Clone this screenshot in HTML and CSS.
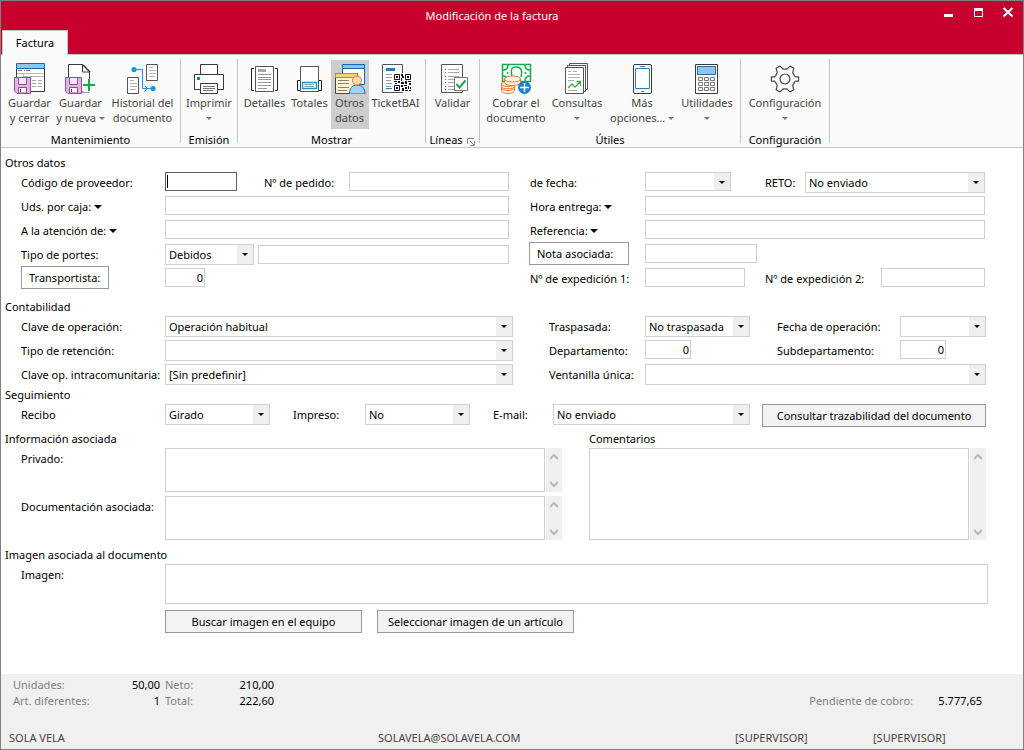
FILE: index.html
```html
<!DOCTYPE html>
<html lang="es">
<head>
<meta charset="utf-8">
<meta name="viewport" content="width=device-width, initial-scale=1">
<title>Modificación de la factura</title>
<link rel="stylesheet" href="styles.css">
</head>
<body>
<div class="window">
  <header class="titlebar">
    <div class="caption">
      <h1 class="caption-text">Modificación de la factura</h1>
      <div class="caption-buttons">
        <button class="caption-btn" aria-label="Minimizar"><svg width="12" height="12" viewBox="0 0 12 12"><rect x="2" y="8" width="9" height="3" fill="#fff"/></svg></button>
        <button class="caption-btn" aria-label="Maximizar"><svg width="12" height="12" viewBox="0 0 12 12"><path d="M2 2h9v9H2zM3 5v5h7V5z" fill="#fff" fill-rule="evenodd"/></svg></button>
        <button class="caption-btn" aria-label="Cerrar"><svg width="12" height="12" viewBox="0 0 12 12"><path d="M1.500 2l9 8.500M10.500 2l-9 8.500" stroke="#fff" stroke-width="2.200"/></svg></button>
      </div>
    </div>
    <nav class="tabs"><button class="tab">Factura</button></nav>
  </header>

  <div class="ribbon">
    <section class="group g-mant">
      <div class="tools">
        <button class="tool">
          <svg class="icon" viewBox="0 0 32 32"><path d="M2.500 6.500h28v23h-28z" fill="#fff" stroke="#3a3a3a"/><path d="M2.500 1.500h28v5h-28z" fill="#8cc6ee" stroke="#1468ad"/><path d="M4 8.500h4m2 0h1m1 0h4" stroke="#777"/><path d="M3 11.500h27M9.500 11v4M9 14.500h21" stroke="#b9b9b9"/><path d="M18 18.500h4m2 0h4M18 21.500h4m2 0h4M18 24.500h4m2 0h4" stroke="#a8a8a8"/><path d="M.5 15.500h16v16H3l-2.500-2.500z" fill="#deb8dd" stroke="#974a9b"/><path d="M4.500 16v6.500h8V16" fill="#f6e8f5" stroke="#974a9b"/><path d="M4.500 31v-5.500h8V31z" fill="#fff" stroke="#974a9b"/><path d="M6.500 27v3" stroke="#444"/></svg>
          <span>Guardar<br>y cerrar</span>
        </button>
        <button class="tool">
          <svg class="icon" viewBox="0 0 32 32"><path d="M3.500 2.500h14l7 7.500v20h-21z" fill="#fff" stroke="#3a3a3a"/><path d="M17.500 2.500v7.500h7.500" fill="#fff" stroke="#3a3a3a"/><path d="M18 3l7 7" stroke="#3a3a3a" stroke-width="1.500"/><path d="M22 17h10v13H18z" fill="#fafafa"/><path d="M.5 15.500h16v16H3l-2.500-2.500z" fill="#deb8dd" stroke="#974a9b"/><path d="M4.500 16v6.500h8V16" fill="#f6e8f5" stroke="#974a9b"/><path d="M4.500 31v-5.500h8V31z" fill="#fff" stroke="#974a9b"/><path d="M6.500 27v3" stroke="#444"/><path d="M24 17v12M18 23h12" stroke="#17a94f" stroke-width="2"/></svg>
          <span>Guardar<br>y nueva <i class="caret grey"></i></span>
        </button>
        <button class="tool">
          <svg class="icon" viewBox="0 0 32 32"><path d="M19.500 2.500h11v16h-11zM.5 15.500h11v16H.5z" fill="#fff" stroke="#555"/><path d="M22 5.500h4M22 8.500h7M22 11.500h7M22 14.500h6M3 18.500h4M3 21.500h7M3 24.500h7M3 27.500h6" stroke="#b0b0b0"/><path d="M7 7.500h8.500v19H25M17.500 23.500l3 3-3 3" fill="none" stroke="#0a9be3"/><circle cx="7" cy="7.500" r="2.600" fill="#0a9be3"/><circle cx="26" cy="26.500" r="2.600" fill="#0a9be3"/></svg>
          <span>Historial del<br>documento</span>
        </button>
      </div>
      <h2 class="group-name">Mantenimiento</h2>
    </section>
    <section class="group g-emis">
      <div class="tools">
        <button class="tool">
          <svg class="icon" viewBox="0 0 32 32"><path d="M7.500 12.500v-10h17v10" fill="#fff" stroke="#3a3a3a"/><path d="M1.500 12.500h29v15h-29z" fill="#fff" stroke="#3a3a3a"/><path d="M7.500 21.500h17v10h-17z" fill="#fff" stroke="#3a3a3a"/><path d="M10 24.500h12M10 26.500h12M10 28.500h10" stroke="#777"/><path d="M4 15h3v3H4z" fill="#1b7fc6"/></svg>
          <span>Imprimir<br><i class="caret grey"></i></span>
        </button>
      </div>
      <h2 class="group-name">Emisión</h2>
    </section>
    <section class="group g-most">
      <div class="tools">
        <button class="tool">
          <svg class="icon" viewBox="0 0 32 32"><path d="M6.500 4.500h18v25h-18z" fill="#fff" stroke="#555"/><path d="M9 7h8v3H9z" fill="#a8a8a8"/><path d="M9 12.500h13M9 15.500h13M9 17.500h13M9 20.500h13M9 23.500h13M9 26.500h9" stroke="#999"/><path d="M5 6.500H2.500v22H5M26 6.500h2.500v22H26" fill="none" stroke="#222"/></svg>
          <span>Detalles</span>
        </button>
        <button class="tool">
          <svg class="icon" viewBox="0 0 32 32"><path d="M6.500 4.500h18v25h-18z" fill="#fff" stroke="#555"/><path d="M8.500 20.500h14v6h-14z" fill="#fff" stroke="#0a9be3" stroke-width="1.400"/><path d="M11 22.500h9M11 24.500h9" stroke="#999"/><path d="M6 18.500H3.500v10H6M25 18.500h2.500v10H25" fill="none" stroke="#222"/></svg>
          <span>Totales</span>
        </button>
        <button class="tool pressed" aria-pressed="true">
          <svg class="icon" viewBox="0 0 32 32"><path d="M8.500 2.500h22v20h-22z" fill="#fff" stroke="#1c6aab"/><path d="M8.500 2.500h22v4h-22z" fill="#8cc6ee" stroke="#1468ad"/><path d="M1.500 11.500h22v20h-22z" fill="#fdf1d2" stroke="#444"/><path d="M1.500 11.500h22v4h-22z" fill="#fbd07c" stroke="#e07b1d"/><path d="M4 18.500h11M4 21.500h11M4 25.500h11M4 28.500h9" stroke="#8a8170"/><path d="M15.500 32c0-6 3-9 7.500-9s8 3 8 9z" fill="#a9d2ef" stroke="#1468ad"/><circle cx="23" cy="18.500" r="4.500" fill="#f9dcb6" stroke="#c77d3a"/></svg>
          <span>Otros<br>datos</span>
        </button>
        <button class="tool">
          <svg class="icon" viewBox="0 0 32 32"><path d="M2.500 2.500h20v28h-20z" fill="#fff" stroke="#555"/><path d="M6 6h9v3H6z" fill="#1b7fc6"/><path d="M6 12.500h6M6 15.500h6M6 18.500h5M6 21.500h6M6 24.500h5" stroke="#999"/><path d="M6 26.500h6" stroke="#1b7fc6"/><path d="M13 11h19v19H13z" fill="#fff"/><path d="M14.500 12.500h5v5h-5zM25.500 12.500h5v5h-5zM14.500 23.500h5v5h-5z" fill="none" stroke="#111"/><path d="M16 14h2v2h-2zM27 14h2v2h-2zM16 25h2v2h-2zM21 12h2v2h-2zM22 14h2v2h-2zM21 16h1v3h-1zM14 19h3v1h-3zM18 19h2v2h-2zM15 21h2v1h-2zM21 20h3v2h-3zM25 19h2v3h-2zM28 19h3v1h-3zM29 21h2v2h-2zM21 23h2v2h-2zM24 23h3v1h-3zM22 26h2v3h-2zM25 25h2v2h-2zM28 24h1v3h-1zM30 25h1v2h-1zM25 28h3v1h-3zM29 28h2v1h-2z" fill="#111"/></svg>
          <span>TicketBAI</span>
        </button>
      </div>
      <h2 class="group-name">Mostrar</h2>
    </section>
    <section class="group g-line">
      <div class="tools">
        <button class="tool">
          <svg class="icon" viewBox="0 0 32 32"><path d="M4.500 2.500h21v28h-21z" fill="#fff" stroke="#555"/><path d="M11 7.500h11M11 10.500h11M11 14.500h11M11 17.500h8M11 20.500h7M11 24.500h7M11 27.500h7" stroke="#a8a8a8"/><path d="M8 7.500h1M8 10.500h1M8 20.500h1M8 24.500h1" stroke="#17a94f"/><path d="M8 14.500h1M8 17.500h1M8 27.500h1" stroke="#d7263d"/><path d="M17.500 15.500h13v13h-13z" fill="#fff" stroke="#777"/><path d="M19.500 22l3 3.500 6-7" fill="none" stroke="#17a94f" stroke-width="2"/></svg>
          <span>Validar</span>
        </button>
      </div>
      <h2 class="group-name">Líneas <svg class="launcher" width="8" height="8" viewBox="0 0 8 8"><path d="M.5 6V.5H7M3 3l4 4M7.500 3v4.500H3" fill="none" stroke="#888"/></svg></h2>
    </section>
    <section class="group g-util">
      <div class="tools">
        <button class="tool">
          <svg class="icon" viewBox="0 0 32 32"><path d="M2.500 2.500h28v17h-28z" fill="#fff" stroke="#17a94f" stroke-width="1.500"/><path d="M3 8q5 0 5-5M25 3q0 5 5 5M25 19q0-5 5-5M3 14q4 0 5 3M12 15c-2-10 1-10 4.500-10s6.500 2 4.500 10" fill="none" stroke="#17a94f" stroke-width="1.500"/><circle cx="7.500" cy="11" r="1" fill="#17a94f"/><circle cx="25.500" cy="11" r="1" fill="#17a94f"/><g fill="#fff4e8" stroke="#e8762c"><path d="M1.500 26v2.500c0 4 13 4 13 0V26z"/><ellipse cx="8" cy="26" rx="6.500" ry="2.500"/><path d="M1.500 22v2.500c0 3 13 3 13 0V22z"/><ellipse cx="8" cy="22" rx="6.500" ry="2.500"/><path d="M4.500 17v3.500c0 4 16 4 16 0V17z"/><ellipse cx="12.500" cy="17" rx="8" ry="3"/></g><circle cx="24.500" cy="25.500" r="6.500" fill="#1b83cc"/><path d="M24.500 21v9M20 25.500h9" stroke="#fff" stroke-width="1.500"/></svg>
          <span>Cobrar el<br>documento</span>
        </button>
        <button class="tool">
          <svg class="icon" viewBox="0 0 32 32"><path d="M8.500 1.500h18v26h-18z" fill="#fff" stroke="#555"/><path d="M6.500 3.500h18v26h-18z" fill="#fff" stroke="#555"/><path d="M4.500 5.500h18v26h-18z" fill="#fff" stroke="#555"/><path d="M7 9.500h3m2 0h4M7 12.500h12M7 15.500h12M7 18.500h6M7 28.500h9" stroke="#b0b0b0"/><path d="M7 26l4-4 3 3 5-5M15.500 19.500h4v4" fill="none" stroke="#3dab35" stroke-width="1.300"/></svg>
          <span>Consultas<br><i class="caret grey"></i></span>
        </button>
        <button class="tool">
          <svg class="icon" viewBox="0 0 32 32"><rect x="7.500" y="2.500" width="18" height="29" rx="1.500" fill="#fff" stroke="#3a3a3a"/><path d="M9.500 6.500h14v20h-14z" fill="#fff" stroke="#1b83cc"/><path d="M14 4.500h5M15 29.500h3" stroke="#777"/></svg>
          <span>Más<br>opciones… <i class="caret grey"></i></span>
        </button>
        <button class="tool">
          <svg class="icon" viewBox="0 0 32 32"><path d="M4.500 2.500h22v29h-22z" fill="#fff" stroke="#3a3a3a"/><path d="M6.500 4.500h18v8h-18z" fill="#8cc6ee" stroke="#1b6fb2"/><path d="M7.500 15.500h4v3h-4zM13.500 15.500h4v3h-4zM19.500 15.500h4v3h-4zM7.500 20.500h4v3h-4zM13.500 20.500h4v3h-4zM19.500 20.500h4v3h-4zM7.500 25.500h4v3h-4zM13.500 25.500h4v3h-4zM19.500 25.500h4v3h-4z" fill="#fff" stroke="#777"/></svg>
          <span>Utilidades<br><i class="caret grey"></i></span>
        </button>
      </div>
      <h2 class="group-name">Útiles</h2>
    </section>
    <section class="group g-conf">
      <div class="tools">
        <button class="tool">
          <svg class="icon" viewBox="-16 -17 32 32"><path d="M9.400-3.400L10.500-2.200H13.600V2.200H10.500L9.400 3.400 7.700 6.400 8.800 10.700 5 12.900 1.700 9.800H-1.700L-5 12.900-8.800 10.700-7.700 6.400-9.400 3.400-10.500 2.200H-13.600V-2.200H-10.500L-9.400-3.400-7.700-6.400-8.800-10.700-5-12.900-1.700-9.800H1.700L5-12.900 8.800-10.700 7.700-6.400Z" fill="#fff" stroke="#4a4a4a" stroke-width="1.200" stroke-linejoin="round"/><circle r="5" fill="none" stroke="#4a4a4a" stroke-width="1.200"/></svg>
          <span>Configuración<br><i class="caret grey"></i></span>
        </button>
      </div>
      <h2 class="group-name">Configuración</h2>
    </section>
  </div>

  <main class="form">
    <h2 class="section-title">Otros datos</h2>
    <div class="columns datos">
      <div>
        <div class="row">
          <label class="label lead" for="prov">Código de proveedor:</label><input class="field w72 active" id="prov" type="text">
          <label class="label pedido" for="pedido">Nº de pedido:</label><input class="field grow" id="pedido" type="text">
        </div>
        <div class="row"><label class="label lead" for="uds">Uds. por caja: <i class="caret"></i></label><input class="field grow" id="uds" type="text"></div>
        <div class="row"><label class="label lead" for="atn">A la atención de: <i class="caret"></i></label><input class="field grow" id="atn" type="text"></div>
        <div class="row">
          <label class="label lead" for="portes">Tipo de portes:</label><span class="combo w89"><select id="portes"><option>Debidos</option></select></span>
          <input class="field grow portes-text" type="text" aria-label="Detalle de portes">
        </div>
        <div class="row"><div class="lead"><button class="btn plain w88">Transportista:</button></div><input class="field w40 number" type="text" value="0" aria-label="Transportista"></div>
      </div>
      <div>
        <div class="row">
          <label class="label side" for="fecha">de fecha:</label><span class="combo date w86"><input id="fecha" type="text"></span>
          <label class="label reto" for="reto">RETO:</label><span class="combo grow"><select id="reto"><option>No enviado</option></select></span>
        </div>
        <div class="row"><label class="label side" for="hora">Hora entrega: <i class="caret"></i></label><input class="field grow" id="hora" type="text"></div>
        <div class="row"><label class="label side" for="ref">Referencia: <i class="caret"></i></label><input class="field grow" id="ref" type="text"></div>
        <div class="row"><div class="side"><button class="btn plain w100">Nota asociada:</button></div><input class="field w112" type="text" aria-label="Nota asociada"></div>
        <div class="row">
          <label class="label side" for="exp1">Nº de expedición 1:</label><input class="field w100" id="exp1" type="text">
          <label class="label exp2" for="exp2">Nº de expedición 2:</label><input class="field grow" id="exp2" type="text">
        </div>
      </div>
    </div>

    <h2 class="section-title spaced">Contabilidad</h2>
    <div class="columns conta">
      <div>
        <div class="row"><label class="label lead" for="clave">Clave de operación:</label><span class="combo grow"><select id="clave"><option>Operación habitual</option></select></span></div>
        <div class="row"><label class="label lead" for="reten">Tipo de retención:</label><span class="combo grow"><select id="reten"><option></option></select></span></div>
        <div class="row"><label class="label lead" for="intra">Clave op. intracomunitaria:</label><span class="combo grow"><select id="intra"><option>[Sin predefinir]</option></select></span></div>
      </div>
      <div>
        <div class="row">
          <label class="label mid" for="trasp">Traspasada:</label><span class="combo w105"><select id="trasp"><option>No traspasada</option></select></span>
          <label class="label fop" for="fop">Fecha de operación:</label><span class="combo w86"><input id="fop" type="text"></span>
        </div>
        <div class="row">
          <label class="label mid" for="dep">Departamento:</label><span class="w105 fixed"><input class="field w46 number" id="dep" type="text" value="0"></span>
          <label class="label fop" for="sub">Subdepartamento:</label><span class="w86 fixed"><input class="field w46 number" id="sub" type="text" value="0"></span>
        </div>
        <div class="row"><label class="label mid" for="vent">Ventanilla única:</label><span class="combo grow"><select id="vent"><option></option></select></span></div>
      </div>
    </div>

    <h2 class="section-title">Seguimiento</h2>
    <div class="row">
      <label class="label lead" for="recibo">Recibo</label><span class="combo w105"><select id="recibo"><option>Girado</option></select></span>
      <label class="label impreso" for="impreso">Impreso:</label><span class="combo w105"><select id="impreso"><option>No</option></select></span>
      <label class="label email" for="email">E-mail:</label><span class="combo grow"><select id="email"><option>No enviado</option></select></span>
      <button class="btn track">Consultar trazabilidad del documento</button>
    </div>

    <div class="columns info">
      <div>
        <h2 class="section-title">Información asociada</h2>
        <div class="memo-row">
          <label class="label lead" for="priv">Privado:</label><textarea class="memo" id="priv"></textarea>
          <span class="scroll" aria-hidden="true"><svg viewBox="0 0 8 6"><path d="M0 5l4-4 4 4"/></svg><svg viewBox="0 0 8 6"><path d="M0 1l4 4 4-4"/></svg></span>
        </div>
        <div class="memo-row">
          <label class="label lead" for="docu">Documentación asociada:</label><textarea class="memo" id="docu"></textarea>
          <span class="scroll" aria-hidden="true"><svg viewBox="0 0 8 6"><path d="M0 5l4-4 4 4"/></svg><svg viewBox="0 0 8 6"><path d="M0 1l4 4 4-4"/></svg></span>
        </div>
      </div>
      <div class="comments">
        <label class="section-title" for="coment">Comentarios</label>
        <div class="memo-row tall">
          <textarea class="memo" id="coment"></textarea>
          <span class="scroll" aria-hidden="true"><svg viewBox="0 0 8 6"><path d="M0 5l4-4 4 4"/></svg><svg viewBox="0 0 8 6"><path d="M0 1l4 4 4-4"/></svg></span>
        </div>
      </div>
    </div>

    <h2 class="section-title image-title">Imagen asociada al documento</h2>
    <div class="image-row">
      <label class="label lead" for="img">Imagen:</label><input class="image-box" id="img" type="text">
    </div>
    <div class="image-buttons">
      <button class="btn w197">Buscar imagen en el equipo</button>
      <button class="btn w197">Seleccionar imagen de un artículo</button>
    </div>
  </main>

  <footer class="footer">
    <div class="totals">
      <dl class="sums">
        <dt>Unidades:</dt><dd>50,00</dd><dt>Neto:</dt><dd>210,00</dd>
        <dt>Art. diferentes:</dt><dd>1</dd><dt>Total:</dt><dd>222,60</dd>
      </dl>
      <dl class="pending"><dt>Pendiente de cobro:</dt><dd>5.777,65</dd></dl>
    </div>
    <div class="status"><span>SOLA VELA</span><span>SOLAVELA@SOLAVELA.COM</span><span>[SUPERVISOR]</span><span>[SUPERVISOR]</span></div>
  </footer>
</div>
</body>
</html>
```

FILE: styles.css
```css
* { box-sizing: border-box; }
body { margin: 0; background: #fff; }
body, button, input, select, textarea {
  font: 11px/16px "Noto Sans", "Open Sans", sans-serif;
  color: #000;
}
h1, h2, dl, dd { margin: 0; font: inherit; }
button { border: 0; padding: 0; background: none; white-space: nowrap; }
svg { display: block; }

.window {
  display: flex;
  flex-direction: column;
  min-height: 100vh;
  border: 1px solid #808080;
}

/* Title bar and tabs */
.titlebar { background: #c8002d; border-bottom: 1px solid #c6c6c6; }
.caption { display: flex; height: 29px; }
.caption-text {
  flex: 1;
  padding-left: 50px;
  color: #fff;
  line-height: 30px;
  text-align: center;
}
.caption-buttons { display: flex; align-items: flex-start; }
.caption-btn { display: flex; justify-content: center; width: 30px; padding-top: 5px; }
.tabs { display: flex; padding-left: 1px; margin-bottom: -1px; }
.tab {
  width: 66px;
  height: 25px;
  background: #fafafa;
  border: 1px solid #c6c6c6;
  border-bottom: 0;
}

/* Ribbon */
.ribbon {
  display: flex;
  background: #fafafa;
  border-bottom: 1px solid #c6c6c6;
  padding: 4px 0;
}
.group {
  display: flex;
  flex-direction: column;
  height: 84px;
  border-right: 1px solid #c6c6c6;
}
.tools { display: flex; justify-content: center; height: 71px; padding-top: 1px; }
.tool {
  display: flex;
  flex-direction: column;
  align-items: center;
  justify-content: flex-start;
  gap: 1px;
  height: 69px;
  padding-top: 2px;
  line-height: 15px;
  color: #444;
}
.tool.pressed { background: #cdcdcd; }
.icon { width: 32px; height: 32px; }
.group-name { text-align: center; height: 13px; line-height: 20px; }
.launcher { display: inline-block; margin-left: 2px; vertical-align: -2px; }
.g-mant { width: 180px; }
.g-mant .tools { padding-left: 2px; }
.g-mant .tool:nth-child(1) { width: 50px; }
.g-mant .tool:nth-child(2) { width: 52px; }
.g-mant .tool:nth-child(3) { width: 72px; }
.g-emis { width: 57px; }
.g-most { width: 188px; }
.g-most .tool:nth-child(1) { width: 48px; }
.g-most .tool:nth-child(2) { width: 42px; }
.g-most .tool:nth-child(3) { width: 38px; }
.g-most .tool:nth-child(4) { width: 54px; }
.g-line { width: 54px; }
.g-util { width: 261px; }
.g-util .tools { padding-left: 2px; }
.g-util .tool:nth-child(1) { width: 62px; }
.g-util .tool:nth-child(2) { width: 60px; }
.g-util .tool:nth-child(3) { width: 70px; }
.g-util .tool:nth-child(4) { width: 60px; }
.g-conf { width: 89px; }

.caret {
  display: inline-block;
  border: 4px solid transparent;
  border-top-color: #000;
  border-bottom: 0;
  vertical-align: 2px;
}
.caret.grey { border-width: 3px 3px 0; border-top-color: #777; margin-left: 2px; }
br + .caret.grey { margin-left: 0; }

/* Form */
.form { flex: 1; padding: 6px 37px 8px 4px; }
.section-title { display: block; height: 16px; line-height: 18px; }
.section-title.spaced { margin-top: 8px; }
.section-title.image-title { margin-top: 4px; }
.columns { display: grid; }
.datos { grid-template-columns: minmax(0, 504fr) minmax(0, 456fr); gap: 20px; padding-right: 1px; }
.conta { grid-template-columns: minmax(0, 508fr) minmax(0, 437fr); gap: 36px; }
.info { grid-template-columns: minmax(0, 557fr) minmax(0, 397fr); gap: 27px; margin-top: 4px; }
.row { display: flex; align-items: flex-start; height: 24px; }
.label { flex: none; line-height: 26px; white-space: nowrap; }
.lead { flex: none; width: 160px; padding-left: 16px; }
.side { flex: none; width: 116px; }
.label.side { padding-left: 1px; }
.mid { width: 96px; }
.fop { flex: 1; padding-left: 27px; }
.pedido { width: 112px; padding-left: 27px; }
.reto { width: 74px; padding-left: 34px; }
.exp2 { width: 136px; padding-left: 20px; }
.impreso { width: 95px; padding-left: 23px; }
.email { width: 83px; padding-left: 23px; }

.field {
  flex: none;
  height: 19px;
  margin: 2px 0 0;
  padding: 0 4px;
  border: 1px solid #d0d0d0;
  background: #fff;
}
.field.grow, .combo.grow { flex: 1; width: 0; min-width: 0; }
.field.active {
  border-color: #606060;
  background: linear-gradient(#000, #000) 1px 2px / 1px 13px no-repeat #fff;
}
.field.number { padding: 0 1px; text-align: right; }
.portes-text { margin: 3px 0 0 4px; }
.fixed { display: flex; flex: none; }

.combo {
  position: relative;
  display: block;
  flex: none;
  height: 21px;
  margin-top: 2px;
  border: 1px solid #d0d0d0;
}
.combo.date { height: 19px; }
.combo select, .combo input {
  display: block;
  width: 100%;
  height: 100%;
  border: 0;
  padding: 0 18px 0 3px;
  background: #fff;
  appearance: none;
}
.combo::before {
  content: "";
  position: absolute;
  inset: 0 0 0 auto;
  width: 16px;
  background: #efefef;
  pointer-events: none;
}
.combo::after {
  content: "";
  position: absolute;
  right: 5px;
  top: 8px;
  border: 3px solid transparent;
  border-top-color: #000;
  border-bottom: 0;
  pointer-events: none;
}

.btn { height: 23px; border: 1px solid #999; background: #f3f3f3; }
.btn.plain { display: block; padding-left: 7px; background: #fff; text-align: left; }
.track { flex: none; width: 224px; margin: 2px 0 0 12px; }

.w40 { width: 40px; }
.w46 { width: 46px; }
.w72 { width: 72px; }
.w86 { width: 86px; }
.w88 { width: 88px; }
.w89 { width: 89px; }
.w100 { width: 100px; }
.w105 { width: 105px; }
.w112 { width: 112px; }
.w197 { width: 197px; }

.memo-row { display: flex; height: 48px; }
.memo-row.tall { height: 96px; }
.memo {
  flex: 1;
  min-width: 0;
  margin: 2px 1px 2px 0;
  padding: 2px 4px;
  border: 1px solid #d0d0d0;
  resize: none;
}
.scroll {
  display: flex;
  flex-direction: column;
  justify-content: space-between;
  align-items: center;
  width: 16px;
  margin: 2px 0;
  padding: 6px 0 5px;
  background: #efefef;
}
.scroll svg { width: 8px; height: 6px; fill: none; stroke: #b8b8b8; stroke-width: 2; }

.image-row { display: flex; margin-right: -2px; }
.image-box { flex: 1; height: 40px; margin: 2px 0 0; border: 1px solid #d0d0d0; }
.image-buttons { display: flex; gap: 15px; margin: 6px 0 0 160px; }

/* Footer */
.footer { background: #f0f0f0; padding-bottom: 3px; }
.totals { display: flex; justify-content: space-between; align-items: flex-end; padding: 3px 41px 21px 12px; }
.sums { display: grid; grid-template-columns: 92px 55px 50px 64px; }
.sums dt:nth-of-type(even) { padding-left: 5px; }
.sums dd, .pending dd { text-align: right; }
.sums dt, .pending dt { color: #808080; white-space: nowrap; }
.pending { display: grid; grid-template-columns: auto 69px; }
.status {
  display: grid;
  grid-template-columns: 369fr 357fr 138fr 150fr;
  padding-left: 8px;
  color: #444;
}
```
